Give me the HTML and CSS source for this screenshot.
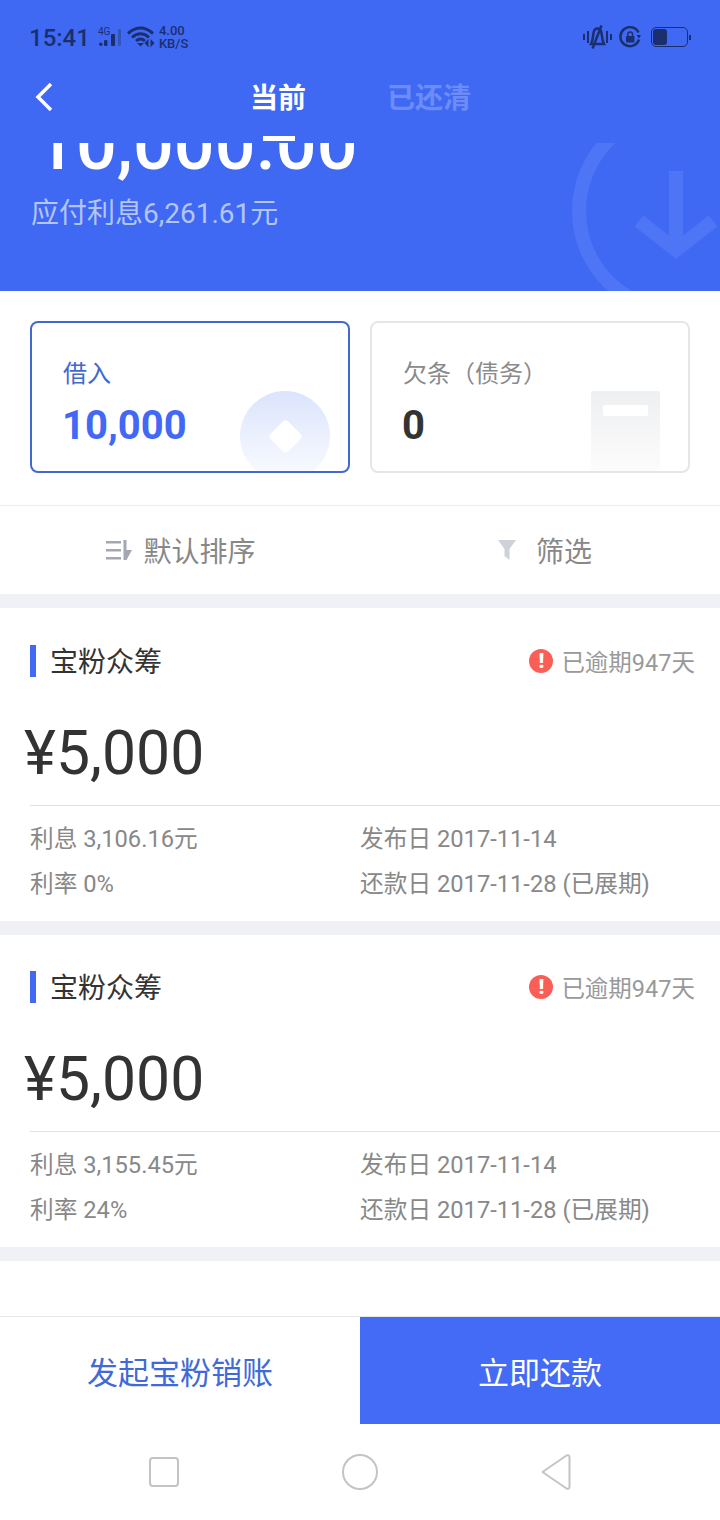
FILE: index.html
```html
<!DOCTYPE html>
<html lang="zh-CN">
<head>
    <meta charset="UTF-8">
    <meta name="viewport" content="width=device-width, initial-scale=1.0">
    <title>宝粉众筹</title>
    <link rel="stylesheet" href="styles.css">
</head>
<body>
    <div class="page">
        <header class="hero">
            <div class="status-bar">
                <div class="status-left">
                    <span class="clock">15:41</span>
                    <svg class="icon-signal" width="26" height="24" viewBox="0 0 26 24">
                        <text x="0" y="10" font-size="10" font-family="Roboto, sans-serif" fill="#1b2f6e">4G</text>
                        <rect x="1" y="17.500" width="3.500" height="3.500" rx="1.700" fill="#1b2f6e"/>
                        <rect x="6" y="15" width="3.500" height="6" rx="1" fill="#1b2f6e"/>
                        <rect x="13" y="9" width="4" height="12" rx="1" fill="#1b2f6e"/>
                        <rect x="20" y="4" width="3" height="17" rx="1" fill="#3355b5"/>
                    </svg>
                    <svg class="icon-wifi" width="30" height="22" viewBox="0 0 30 22">
                        <path d="M1 7.500 Q13.500-3.500 26 7.500M5 11.500 Q13.500 4 22 11.500M9 15 Q13.500 11 18 15" fill="none" stroke="#1b2f6e" stroke-width="3"/>
                        <path d="M13.500 20.500 L10 17 H17Z" fill="#1b2f6e"/>
                        <path d="M21.500 13 V21.500 L17.500 17ZM23.500 13 V21.500 L27.500 17Z" fill="#1b2f6e"/>
                    </svg>
                    <span class="speed"><b>4.00</b><b>KB/S</b></span>
                </div>
                <div class="status-right">
                    <svg class="icon-bell" width="29" height="24" viewBox="0 0 29 24">
                        <path d="M1 9 V15M5 6 V18M24 6 V18M28 9 V15" stroke="#1b2f6e" stroke-width="2" fill="none"/>
                        <path d="M8 19 C10 15 10 11 10.500 8 C11 5 12.500 3.500 14.500 3.500 C16.500 3.500 18 5 18.500 8 C19 11 19 15 21 19Z" fill="none" stroke="#1b2f6e" stroke-width="2.500"/>
                        <path d="M18.500 0.500 L9.500 23.500" stroke="#1b2f6e" stroke-width="2.500"/>
                    </svg>
                    <svg class="icon-lock" width="22" height="22" viewBox="0 0 22 22">
                        <path d="M20 13.500 A9.500 9.500 0 1 1 19.500 6.500" fill="none" stroke="#1b2f6e" stroke-width="2.500"/>
                        <path d="M17.500 9 H22 L20 12.500Z" fill="#1b2f6e"/>
                        <rect x="7" y="10" width="8.500" height="6.500" rx="1" fill="#1b2f6e"/>
                        <path d="M8.800 10.500 V8.500 A2.400 2.400 0 0 1 13.600 8.500 V10.500" fill="none" stroke="#1b2f6e" stroke-width="1.500"/>
                    </svg>
                    <div class="battery"><div class="battery-level"></div></div>
                    <div class="battery-tip"></div>
                </div>
            </div>
            <nav class="tabs">
                <svg class="back" width="20" height="30" viewBox="0 0 20 30">
                    <path d="M17 2 L4 15 L17 28" fill="none" stroke="#fff" stroke-width="3.500"/>
                </svg>
                <span class="tab tab-active">当前</span>
                <span class="tab tab-idle">已还清</span>
            </nav>
            <div class="amount-clip">
                <div class="amount">10,000.00</div>
            </div>
            <i class="amount-stroke"></i>
            <p class="interest">应付利息6,261.61元</p>
            <svg class="hero-mark" width="149" height="148" viewBox="0 0 149 148">
                <circle cx="108" cy="68" r="100" fill="none" stroke="#4d75f6" stroke-width="14"/>
                <path d="M105 28 V110 M68 78 L105 107 L142 78" fill="none" stroke="#4d75f6" stroke-width="14"/>
            </svg>
        </header>

        <section class="summary">
            <div class="card card-active">
                <div class="card-label">借入</div>
                <div class="card-value">10,000</div>
                <div class="coin"><i></i></div>
            </div>
            <div class="card">
                <div class="card-label">欠条（债务）</div>
                <div class="card-value">0</div>
                <div class="note"><i></i></div>
            </div>
        </section>

        <div class="sort-bar">
            <div class="sort-item">
                <svg width="26" height="22" viewBox="0 0 26 22">
                    <path d="M0 2 H15 V4.500 H0ZM0 10 H15 V12.500 H0ZM0 18 H15 V20.500 H0Z" fill="#a2a7b2"/>
                    <path d="M17.500 1 H20.500 V11 H26 L20.500 21 H17.500Z" fill="#a2a7b2"/>
                </svg>
                <span>默认排序</span>
            </div>
            <div class="sort-item sort-filter">
                <svg width="18" height="22" viewBox="0 0 18 22">
                    <path d="M0 1 H18 L11.500 10 V21 L6.500 17 V10Z" fill="#cfd1d8"/>
                </svg>
                <span>筛选</span>
            </div>
        </div>

        <article class="loan">
            <div class="loan-head">
                <h3 class="loan-title">宝粉众筹</h3>
                <div class="overdue">
                    <span class="overdue-dot">!</span>
                    <span>已逾期947天</span>
                </div>
            </div>
            <div class="loan-amount">¥5,000</div>
            <div class="loan-info">
                <span>利息 3,106.16元</span>
                <span>发布日 2017-11-14</span>
                <span>利率 0%</span>
                <span>还款日 2017-11-28 (已展期)</span>
            </div>
        </article>

        <article class="loan loan-second">
            <div class="loan-head">
                <h3 class="loan-title">宝粉众筹</h3>
                <div class="overdue">
                    <span class="overdue-dot">!</span>
                    <span>已逾期947天</span>
                </div>
            </div>
            <div class="loan-amount">¥5,000</div>
            <div class="loan-info">
                <span>利息 3,155.45元</span>
                <span>发布日 2017-11-14</span>
                <span>利率 24%</span>
                <span>还款日 2017-11-28 (已展期)</span>
            </div>
        </article>

        <div class="spacer"></div>

        <footer class="actions">
            <div class="action action-plain">发起宝粉销账</div>
            <div class="action action-main">立即还款</div>
        </footer>

        <div class="nav-bar">
            <svg width="30" height="30" viewBox="0 0 30 30">
                <rect x="1" y="1" width="28" height="28" rx="3" fill="none" stroke="#c4c4c4" stroke-width="2"/>
            </svg>
            <svg width="36" height="36" viewBox="0 0 36 36">
                <circle cx="18" cy="18" r="17" fill="none" stroke="#c4c4c4" stroke-width="2"/>
            </svg>
            <svg width="32" height="36" viewBox="0 0 32 36">
                <path d="M1.500 18 L25.500 1.500 Q28.500 0.500 28.500 3.500 V32.500 Q28.500 35.500 25.500 34.500 Z" fill="none" stroke="#c4c4c4" stroke-width="2" stroke-linejoin="round"/>
            </svg>
        </div>
    </div>
</body>
</html>
```

FILE: styles.css
```css
* {
    box-sizing: border-box;
}
body {
    margin: 0;
    padding: 0;
    background-color: #fff;
    font-family: Roboto, "Noto Sans CJK SC", sans-serif;
    color: #333;
}
.page {
    display: flex;
    flex-direction: column;
    width: 720px;
    height: 1520px;
    overflow: hidden;
}

/* blue header */
.hero {
    position: relative;
    height: 291px;
    flex: none;
    background: #4069f3;
    overflow: hidden;
}
.status-bar {
    display: flex;
    justify-content: space-between;
    align-items: center;
    height: 74px;
    padding: 0 29px;
    color: #1b2f6e;
}
.status-left, .status-right {
    display: flex;
    align-items: center;
}
.clock {
    font-size: 24px;
    font-weight: 500;
    margin: 1px 8px 0 0;
}
.icon-wifi {
    margin-left: 3px;
}
.speed {
    display: flex;
    flex-direction: column;
    margin-left: 2px;
    font-size: 13px;
    line-height: 13px;
}
.speed b {
    font-weight: 500;
}
.icon-bell {
    margin-right: 7px;
}
.icon-lock {
    margin-right: 10px;
}
.battery {
    width: 37px;
    height: 20px;
    padding: 1px;
    border: 1px solid #1b2f6e;
    border-radius: 5px;
}
.battery-level {
    width: 14px;
    height: 16px;
    background: #1b2f6e;
    border-radius: 3px;
}
.battery-tip {
    width: 2px;
    height: 5px;
    margin-left: 1px;
    background: #1b2f6e;
}
.tabs {
    display: flex;
    align-items: center;
    height: 46px;
    padding-left: 34px;
}
.back {
    margin-right: 196px;
}
.tab {
    margin-top: 4px;
    font-size: 28px;
    line-height: 42px;
    font-weight: 700;
}
.tab-active {
    color: #fff;
    margin-right: 81px;
}
.tab-idle {
    color: #6c8cf8;
}
.amount-clip {
    height: 49px;
    margin-top: 23px;
    padding-left: 35px;
    overflow: hidden;
}
.amount {
    margin-top: -40px;
    font-size: 72px;
    line-height: 84px;
    font-weight: 500;
    color: #fff;
}
.amount-stroke {
    position: absolute;
    left: 263px;
    top: 136px;
    width: 32px;
    height: 5px;
    background: #fff;
}
.interest {
    margin: 2px 0 0;
    padding-left: 31px;
    font-size: 28px;
    line-height: 40px;
    color: #b4c5fb;
}
.hero-mark {
    position: absolute;
    right: 0;
    top: 143px;
}

/* two summary cards */
.summary {
    display: flex;
    gap: 20px;
    height: 215px;
    flex: none;
    padding: 30px 30px 0;
    border-bottom: 1px solid #ececec;
}
.card {
    position: relative;
    width: 320px;
    height: 152px;
    padding: 35px 30px 0;
    border: 2px solid #e6e6e6;
    border-radius: 8px;
    overflow: hidden;
}
.card-active {
    border-color: #4169d0;
}
.card-label {
    padding-left: 1px;
    font-size: 24px;
    line-height: 32px;
    color: #8a8a8a;
}
.card-active .card-label {
    color: #4169d0;
}
.card-value {
    margin-top: 12px;
    font-size: 40px;
    line-height: 48px;
    font-weight: 700;
    color: #333;
}
.card-active .card-value {
    color: #4169f5;
}
.coin {
    position: absolute;
    right: 18px;
    top: 68px;
    width: 90px;
    height: 90px;
    border-radius: 50%;
    background: linear-gradient(#dbe4fc, #fbfcff);
}
.coin i {
    position: absolute;
    left: 33px;
    top: 33px;
    width: 25px;
    height: 25px;
    border-radius: 4px;
    background: #fff;
    transform: rotate(45deg);
}
.note {
    position: absolute;
    right: 28px;
    top: 68px;
    width: 69px;
    height: 80px;
    border-radius: 2px;
    background: linear-gradient(#eeeff1, #fcfcfc);
}
.note i {
    position: absolute;
    left: 12px;
    top: 14px;
    width: 45px;
    height: 11px;
    border-radius: 2px;
    background: #fff;
}

/* sort row */
.sort-bar {
    display: flex;
    height: 102px;
    flex: none;
    border-bottom: 14px solid #f0f1f6;
}
.sort-item {
    display: flex;
    align-items: center;
    justify-content: center;
    width: 50%;
    gap: 11px;
    padding-left: 2px;
    font-size: 28px;
    color: #888;
}
.sort-filter {
    gap: 20px;
    padding-left: 10px;
}

/* loan rows */
.loan {
    height: 327px;
    flex: none;
    padding-left: 30px;
    border-bottom: 14px solid #f0f1f6;
}
.loan-second {
    height: 326px;
}
.loan-head {
    display: flex;
    justify-content: space-between;
    align-items: center;
    height: 32px;
    margin-top: 37px;
    padding-right: 25px;
}
.loan-second .loan-head {
    margin-top: 36px;
}
.loan-title {
    height: 32px;
    margin: 0;
    padding-left: 14px;
    border-left: 6px solid #4169f5;
    font-size: 28px;
    line-height: 36px;
    font-weight: 400;
    color: #333;
}
.overdue {
    display: flex;
    align-items: center;
    gap: 8px;
    font-size: 23.500px;
    color: #999;
}
.overdue-dot {
    width: 24px;
    height: 24px;
    border-radius: 50%;
    background: #fa5f57;
    color: #fff;
    font-size: 21px;
    line-height: 24px;
    font-weight: 900;
    text-align: center;
}
.loan-amount {
    margin: 42px 0 0 -6px;
    height: 60px;
    font-size: 60.700px;
    line-height: 70px;
    color: #333;
}
.loan-info {
    display: grid;
    grid-template-columns: 330px 1fr;
    grid-auto-rows: 45px;
    align-items: center;
    margin-top: 26px;
    padding-top: 8px;
    border-top: 1px solid #e2e2e2;
    font-size: 23.700px;
    color: #888;
}
.spacer {
    flex: 1;
}

/* bottom buttons */
.actions {
    display: flex;
    height: 108px;
    flex: none;
    border-top: 1px solid #e6e6e6;
}
.action {
    display: flex;
    align-items: center;
    justify-content: center;
    width: 50%;
    font-size: 31px;
}
.action-plain {
    color: #4169d8;
}
.action-main {
    background: #436bf5;
    color: #fff;
}
.nav-bar {
    display: flex;
    justify-content: center;
    align-items: center;
    gap: 163px;
    height: 96px;
    flex: none;
    padding-left: 2px;
}
```
